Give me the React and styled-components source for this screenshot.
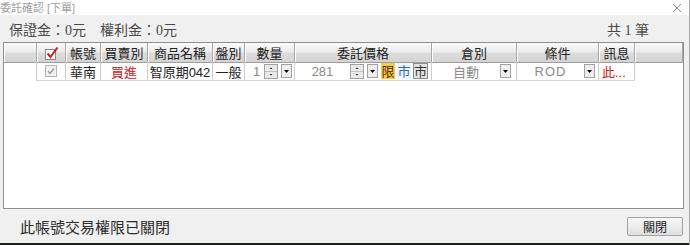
import React from 'react';
import styled, { createGlobalStyle } from 'styled-components';

const COLS = '33px 29px 35px 47px 65px 32px 50px 137px 85px 82px 36px 1fr';

const GlobalStyle = createGlobalStyle`
  html, body {
    margin: 0;
    padding: 0;
    background: #fff;
  }
  body {
    font-family: "Liberation Sans", "Noto Sans CJK TC", sans-serif;
  }
`;

const Window = styled.div`
  box-sizing: border-box;
  width: 690px;
  height: 245px;
  display: flex;
  flex-direction: column;
  background: #f0f0f0;
  border-right: 1px solid #a8a8a8;
  overflow: hidden;
`;

const TitleBar = styled.div`
  height: 15px;
  flex: none;
  display: flex;
  align-items: center;
  justify-content: space-between;
  padding: 0 7px 0 0;
  background: #fff;
`;

const Title = styled.span`
  font-size: 11px;
  line-height: 12px;
  color: #a0a0a0;
`;

const InfoRow = styled.div`
  height: 27px;
  flex: none;
  display: flex;
  align-items: center;
  justify-content: space-between;
  padding: 0 40px 0 9px;
  font-family: "Liberation Serif", "Noto Sans CJK TC", serif;
  font-size: 14px;
  color: #4a4a4a;
`;

const Money = styled.span`
  margin-right: 14px;
`;

const Table = styled.div`
  flex: none;
  height: 167px;
  margin: 0 5px 0 3px;
  box-sizing: border-box;
  border: 1px solid #8e8f8f;
  background: #fff;
`;

const HeaderRow = styled.div`
  display: grid;
  grid-template-columns: ${COLS};
  height: 19px;
`;

const HeadCell = styled.div`
  display: flex;
  align-items: center;
  justify-content: center;
  box-sizing: border-box;
  background: linear-gradient(#fbfbfb, #ececec 45%, #dcdcdc 55%, #d4d4d4);
  border-right: 1px solid #a7a7a7;
  border-bottom: 1px solid #9e9e9e;
  box-shadow: inset 1px 0 #fff;
  font-size: 13px;
  color: #222;
  white-space: nowrap;
`;

const DataRow = styled.div`
  display: grid;
  grid-template-columns: ${COLS};
  height: 19px;
`;

const Cell = styled.div`
  display: flex;
  align-items: center;
  justify-content: ${p => p.$align || 'center'};
  box-sizing: border-box;
  border-right: ${p => (p.$bare ? 'none' : '1px solid #cdcdcd')};
  border-bottom: ${p => (p.$bare || p.$first ? 'none' : '1px solid #d6d6d6')};
  padding: ${p => p.$pad || '0'};
  font-size: 13px;
  color: ${p => p.$color || '#222'};
  white-space: nowrap;
  overflow: hidden;
`;

const FieldValue = styled.span`
  flex: 1;
  text-align: ${p => p.$align || 'center'};
  padding-left: ${p => p.$indent || '0'};
  color: #8a8a8a;
  letter-spacing: ${p => p.$spacing || '0'};
`;

const Controls = styled.div`
  display: flex;
  align-items: center;
  gap: ${p => p.$gap || '3px'};
  margin-left: ${p => p.$offset || '0'};
`;

const PriceTag = styled.span`
  box-sizing: border-box;
  width: ${p => (p.$kind === 'boxed' ? '15px' : '14px')};
  height: 16px;
  display: flex;
  align-items: center;
  justify-content: center;
  font-size: 13px;
  line-height: 1;
  background: ${p => (p.$kind === 'limit' ? '#f8c84a' : p.$kind === 'boxed' ? '#e2e2e2' : '#eef4fb')};
  color: ${p => (p.$kind === 'limit' ? '#4a2c00' : p.$kind === 'boxed' ? '#333' : '#2e6db4')};
  border: ${p => (p.$kind === 'boxed' ? '1px solid #8c8c8c' : 'none')};
`;

const Footer = styled.div`
  flex: 1;
  display: flex;
  align-items: center;
  justify-content: space-between;
  padding: 0 6px 0 20px;
`;

const Notice = styled.span`
  font-size: 15px;
  color: #2a2a2a;
`;

const CloseButton = styled.button`
  width: 56px;
  height: 19px;
  padding: 0;
  border: 1px solid #a3a3a3;
  border-radius: 2px;
  background: linear-gradient(#f8f8f8, #ececec 50%, #dedede);
  font-family: "Liberation Sans", "Noto Sans CJK TC", sans-serif;
  font-size: 12px;
  color: #222;
`;

const BottomStrip = styled.div`
  flex: none;
  height: 2px;
  background: #1c1f1c;
`;

function CloseIcon() {
  return (
    <svg width="10" height="10" viewBox="0 0 10 10">
      <path d="M1 1 L9 9 M9 1 L1 9" stroke="#8c8c8c" strokeWidth="1" />
    </svg>
  );
}

function CheckBox({ active }) {
  if (active) {
    return (
      <svg width="15" height="14" viewBox="0 0 15 14">
        <rect x="1.5" y="3.5" width="10" height="10" fill="#fff" stroke="#8a8a8a" />
        <path d="M3.5 7.5 L6.5 11 L13.5 1.5" stroke="#d01818" strokeWidth="2" fill="none" />
      </svg>
    );
  }
  return (
    <svg width="12" height="12" viewBox="0 0 12 12">
      <rect x="0.5" y="0.5" width="11" height="11" fill="#f2f2f2" stroke="#b4b4b4" />
      <path d="M3 6 L5 8.5 L9 3.5" stroke="#9a9a9a" strokeWidth="1.4" fill="none" />
    </svg>
  );
}

function Spinner() {
  return (
    <svg width="14" height="15" viewBox="0 0 14 15">
      <rect x="0.5" y="0.5" width="13" height="14" fill="#e9e9e9" stroke="#a2a2a2" />
      <line x1="1" y1="7.5" x2="13" y2="7.5" stroke="#c4c4c4" />
      <path d="M5.5 5 L8.5 5 L7 3.5 Z" fill="#222" />
      <path d="M5.5 10 L8.5 10 L7 11.5 Z" fill="#222" />
    </svg>
  );
}

function DropArrow() {
  return (
    <svg width="11" height="14" viewBox="0 0 11 14">
      <rect x="0.5" y="0.5" width="10" height="13" fill="#eeeeee" stroke="#a2a2a2" />
      <path d="M3 6 L8 6 L5.5 9 Z" fill="#000" />
    </svg>
  );
}

const headers = ['', 'check', '帳號', '買賣別', '商品名稱', '盤別', '數量', '委託價格', '倉別', '條件', '訊息', ''];

export default function App() {
  return (
    <>
      <GlobalStyle />
      <Window>
        <TitleBar>
          <Title>委託確認 [下單]</Title>
          <CloseIcon />
        </TitleBar>

        <InfoRow>
          <span>
            <Money>保證金：0元</Money>
            <Money>權利金：0元</Money>
          </span>
          <span>共 1 筆</span>
        </InfoRow>

        <Table>
          <HeaderRow>
            {headers.map((h, i) => (
              <HeadCell key={`head-${i}`}>
                {h === 'check' ? <CheckBox active /> : h}
              </HeadCell>
            ))}
          </HeaderRow>

          <DataRow>
            <Cell $first />
            <Cell><CheckBox /></Cell>
            <Cell>華南</Cell>
            <Cell $color="#d01818">買進</Cell>
            <Cell>智原期042</Cell>
            <Cell>一般</Cell>
            <Cell $pad="0 2px 0 0">
              <FieldValue $align="left" $indent="8px">1</FieldValue>
              <Controls>
                <Spinner />
                <DropArrow />
              </Controls>
            </Cell>
            <Cell $pad="0 3px 0 0">
              <FieldValue>281</FieldValue>
              <Controls>
                <Spinner />
                <DropArrow />
              </Controls>
              <Controls $gap="2px" $offset="3px">
                <PriceTag $kind="limit">限</PriceTag>
                <PriceTag $kind="market">市</PriceTag>
                <PriceTag $kind="boxed">市</PriceTag>
              </Controls>
            </Cell>
            <Cell $pad="0 5px 0 0">
              <FieldValue>自動</FieldValue>
              <DropArrow />
            </Cell>
            <Cell $pad="0 3px 0 0">
              <FieldValue $spacing="1px">ROD</FieldValue>
              <DropArrow />
            </Cell>
            <Cell $align="flex-start" $pad="0 0 0 3px" $color="#d01818">此...</Cell>
            <Cell $bare />
          </DataRow>
        </Table>

        <Footer>
          <Notice>此帳號交易權限已關閉</Notice>
          <CloseButton>關閉</CloseButton>
        </Footer>
        <BottomStrip />
      </Window>
    </>
  );
}
